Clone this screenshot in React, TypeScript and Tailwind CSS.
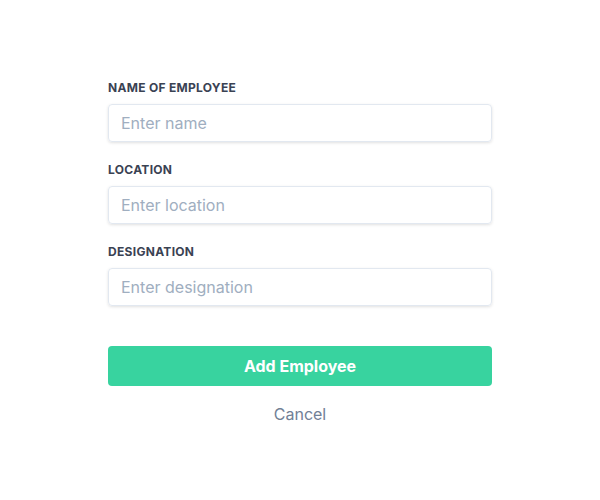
import React from 'react';

const fields = [
  { label: 'Name of employee', placeholder: 'Enter name' },
  { label: 'Location', placeholder: 'Enter location' },
  { label: 'Designation', placeholder: 'Enter designation' },
];

export default function App() {
  return (
    <div
      className="w-[600px] h-[500px] bg-white flex justify-center pt-[80px]"
      style={{ fontFamily: 'Inter, "Noto Sans", sans-serif' }}
    >
      <form className="w-[384px] flex flex-col" onSubmit={(e) => e.preventDefault()}>
        {fields.map((f) => (
          <div key={f.label} className="mb-5">
            <label className="block text-xs font-bold uppercase tracking-wide text-[#3a4253] leading-4 mb-2">
              {f.label}
            </label>
            <input
              type="text"
              placeholder={f.placeholder}
              className="w-full h-[38px] px-3 rounded border border-[#e2e8f0] shadow-[0_1px_3px_rgba(0,0,0,0.12)] text-base text-[#4a5568] placeholder:text-[#a0aec0] outline-none"
            />
          </div>
        ))}
        <button
          type="submit"
          className="mt-5 h-[40px] w-full rounded bg-[#38d39f] text-white font-bold text-base"
        >
          Add Employee
        </button>
        <button type="button" className="mt-4 text-base text-[#718096] leading-6 self-center">
          Cancel
        </button>
      </form>
    </div>
  );
}
